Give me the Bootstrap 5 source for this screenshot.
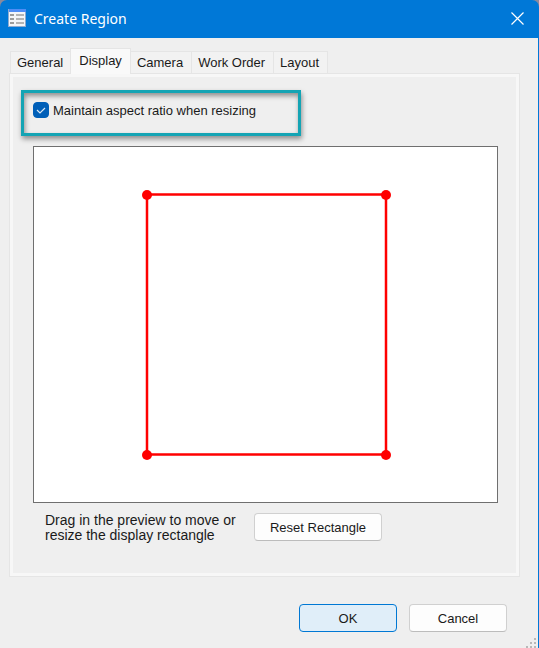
<!DOCTYPE html>
<html lang="en">
<head>
<meta charset="utf-8">
<meta name="viewport" content="width=device-width, initial-scale=1">
<title>Create Region</title>
<link href="https://cdn.jsdelivr.net/npm/bootstrap@5.3.0/dist/css/bootstrap.min.css" rel="stylesheet">
<style>
body { background: #efefef; color: #1a1a1a; font: 13px/15px "Liberation Sans", Arial, sans-serif; }
.dialog-window { border-right: 1px solid #0078d7; background: #efefef; }
.title-wrap { background: #8a8a9c; margin-right: -1px; }
.title-bar { background: #0078d7; color: #fff; height: 38px; padding: 0 15px 3px 8px; border-radius: 7px 7px 0 0; gap: 8px; }
.title-bar h1 { font: 14px/20px "Noto Sans", "Segoe UI", sans-serif; padding-top: 2px; }
.close-btn { line-height: 0; color: #fff; padding: 2px 0 0; border: 0; }
.tab-area { padding: 10px 18px 0 9px; }
.nav-tabs { border: 0; padding-left: 2px; }
.nav-tabs .nav-link { height: 22px; margin: 0 0 0 -1px; padding: 0 7px 0 6px; border: 1px solid #e5e5e5; border-bottom: 0; border-radius: 0; background: #f2f2f2; color: #1a1a1a; }
.nav-tabs .nav-link.active { height: 26px; margin-bottom: -1px; padding: 0 8px 3px; background: #f9f9f9; color: #1a1a1a; border-color: #e5e5e5; position: relative; z-index: 1; }
.nav-tabs .nav-link.active ~ .nav-link { padding: 0 8px 0 6px; }
.tab-page { border: 1px solid #e5e5e5; padding: 16px 21px 33px 11px; box-shadow: inset 0 0 0 3px #f7f7f7; }
.callout-box { width: 280px; max-width: 100%; height: 46px; border: 3px solid #14a4b4; padding: 9px; box-shadow: 1px 3px 5px rgba(0,0,0,.4), inset 1px 3px 5px rgba(0,0,0,.4); }
.callout-box .form-check-input { width: 16px; height: 16px; margin: 0; border-radius: 4px; }
.callout-box .form-check-input:checked { background-color: #005fb8; border-color: #005fb8; background-image: none; }
.tick { position: absolute; left: 0; top: 0; pointer-events: none; }
.preview { margin: 10px 0 0 12px; border: 1px solid #6f6f6f; background: #fff; }
.hint-row { padding: 10px 0 0 24px; }
.hint { width: 209px; font-size: 14px; }
.dlg-btn { height: 28px; padding: 0; border: 1px solid #d0d0d0; border-bottom-color: #bcbcbc; border-radius: 4px; background: #fdfdfd; color: #1a1a1a; font-size: 13px; line-height: 15px; width: 98px; }
.reset-btn { width: 128px; }
.ok-btn { background: #e0eef9; border-color: #0078d4; }
.actions { padding: 27px 31px 15px 0; gap: 12px; }
.grip { position: absolute; right: 1px; bottom: 0; }
</style>
<script src="https://cdn.jsdelivr.net/npm/bootstrap@5.3.0/dist/js/bootstrap.bundle.min.js" defer></script>
</head>
<body>
<main class="dialog-window min-vh-100 position-relative d-flex flex-column">
  <div class="title-wrap">
    <header class="title-bar d-flex align-items-center">
      <svg width="18" height="18" viewBox="0 0 18 18" aria-hidden="true"><rect width="18" height="18" fill="#8fabd0"/><rect x="1" y="1" width="16" height="16" fill="#f4f5f7"/><rect x="1" y="0" width="17" height="3" fill="#4f8df5"/><path d="M2 6h4M2 10h4M2 14h4" stroke="#9c9c9c" stroke-width="2"/><path d="M8 6h8M8 10h8M8 14h8" stroke="#b4b4b4" stroke-width="2"/></svg>
      <h1 class="m-0 me-auto">Create Region</h1>
      <button type="button" class="close-btn btn" aria-label="Close"><svg width="13" height="13" viewBox="0 0 13 13" stroke="currentColor" stroke-width="1.200"><path d="M.5.5l12 12M12.500.5l-12 12"/></svg></button>
    </header>
  </div>
  <div class="tab-area">
    <div class="nav nav-tabs align-items-end" role="tablist">
      <button type="button" class="nav-link" role="tab">General</button>
      <button type="button" class="nav-link active" role="tab" aria-selected="true">Display</button>
      <button type="button" class="nav-link" role="tab">Camera</button>
      <button type="button" class="nav-link" role="tab">Work Order</button>
      <button type="button" class="nav-link" role="tab">Layout</button>
    </div>
    <section class="tab-page" role="tabpanel">
      <div class="callout-box">
        <div class="d-flex align-items-center gap-1 position-relative">
          <input class="form-check-input" type="checkbox" id="keepRatio" checked>
          <svg class="tick" width="16" height="16" viewBox="0 0 16 16" fill="none" stroke="#d8e8f6" stroke-width="1.200"><path d="M4 8l3 3 5-5"/></svg>
          <label for="keepRatio">Maintain aspect ratio when resizing</label>
        </div>
      </div>
      <div class="preview">
        <svg class="d-block w-100" viewBox="0 0 463 355" role="img" aria-label="Display rectangle preview">
          <rect x="113" y="47.500" width="239" height="260" fill="none" stroke="#f00" stroke-width="2.500"/>
          <g fill="#f00"><circle cx="113" cy="48" r="5"/><circle cx="352" cy="48" r="5"/><circle cx="113" cy="308" r="5"/><circle cx="352" cy="308" r="5"/></g>
        </svg>
      </div>
      <div class="hint-row d-flex">
        <p class="hint m-0">Drag in the preview to move or resize the display rectangle</p>
        <button type="button" class="btn dlg-btn reset-btn">Reset Rectangle</button>
      </div>
    </section>
  </div>
  <footer class="actions d-flex justify-content-end">
    <button type="button" class="btn dlg-btn ok-btn">OK</button>
    <button type="button" class="btn dlg-btn">Cancel</button>
  </footer>
  <svg class="grip" width="12" height="10" viewBox="0 0 12 10" fill="#b8b8b8" aria-hidden="true"><path d="M9 0h2v2h-2zM5 4h2v2h-2zM9 4h2v2h-2zM1 8h2v2h-2zM5 8h2v2h-2zM9 8h2v2h-2z"/></svg>
</main>
</body>
</html>
